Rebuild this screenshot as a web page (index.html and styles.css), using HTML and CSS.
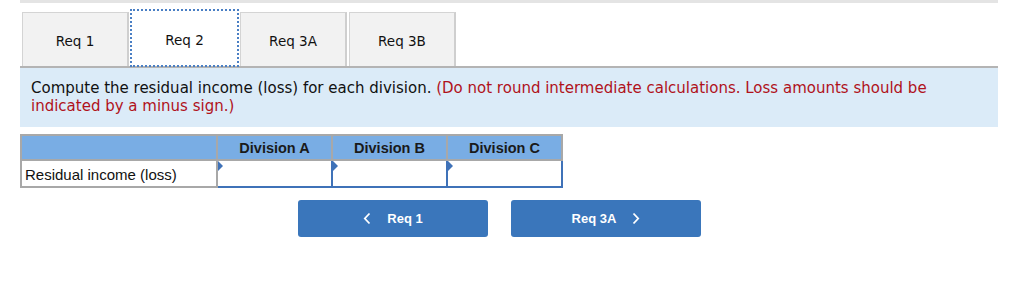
FILE: index.html
```html
<!DOCTYPE html>
<html lang="en">
<head>
  <meta charset="UTF-8">
  <title>Residual Income</title>
  <link rel="stylesheet" href="styles.css">
</head>
<body>
  <div class="page">
    <div class="top-bar"></div>

    <div class="tabs">
      <div class="tab">Req 1</div>
      <div class="tab active">Req 2</div>
      <div class="tab">Req 3A</div>
      <div class="tab">Req 3B</div>
    </div>

    <div class="question">
      Compute the residual income (loss) for each division. <span class="note">(Do not round intermediate calculations. Loss amounts should be indicated by a minus sign.)</span>
    </div>

    <table class="answer">
      <tr>
        <th class="label-col"></th>
        <th>Division A</th>
        <th>Division B</th>
        <th>Division C</th>
      </tr>
      <tr>
        <td class="label-col">Residual income (loss)</td>
        <td class="input-cell"><span class="marker"></span></td>
        <td class="input-cell"><span class="marker"></span></td>
        <td class="input-cell"><span class="marker"></span></td>
      </tr>
    </table>

    <div class="nav-buttons">
      <button class="nav-btn">
        <svg width="8" height="13" viewBox="0 0 8 13"><path d="M6.5 1.5 L1.8 6.5 L6.5 11.5" fill="none" stroke="#fff" stroke-width="1.8"/></svg>
        <span>Req 1</span>
      </button>
      <button class="nav-btn">
        <span>Req 3A</span>
        <svg width="8" height="13" viewBox="0 0 8 13"><path d="M1.5 1.5 L6.2 6.5 L1.5 11.5" fill="none" stroke="#fff" stroke-width="1.8"/></svg>
      </button>
    </div>
  </div>
</body>
</html>
```

FILE: styles.css
```css
* {
  margin: 0;
  padding: 0;
  box-sizing: border-box;
}

body {
  background: #fff;
  font-family: "DejaVu Sans", Verdana, sans-serif;
  color: #222;
}

.page {
  margin-left: 20px;
  width: 978px;
}

.top-bar {
  height: 3px;
  background: #e4e4e4;
}

/* Tabs */
.tabs {
  display: flex;
  gap: 2px;
  padding: 9px 0 0 2px;
}

.tab {
  width: 107px;
  height: 54px;
  display: flex;
  align-items: center;
  justify-content: center;
  padding-top: 2px;
  background: #f2f2f2;
  border: 1px solid #d4d4d4;
  border-right: 2px solid #cfcfcf;
  border-bottom: none;
  font-size: 13.5px;
  color: #111;
}

.tab.active {
  background: #fff;
  border: none;
  outline: 2px dotted #4a7fc4;
  outline-offset: -1px;
  height: 56px;
  margin-top: -2px;
  padding-top: 4px;
  position: relative;
  z-index: 1;
}

/* Question panel */
.question {
  background: #dbebf8;
  border-top: 2px solid #b4b4b4;
  padding: 11px 11px 0 11px;
  font-size: 15px;
  line-height: 18px;
  color: #111;
  height: 61px;
}

.note {
  color: #b0121b;
}

/* Table */
.answer {
  margin-top: 7px;
  border-collapse: collapse;
  font-family: "Liberation Sans", Arial, sans-serif;
  border: 2px solid #a8a8a8;
}

.answer th {
  background: #79ade4;
  height: 25px;
  font-size: 14.5px;
  font-weight: bold;
  color: #1a1a1a;
  border: 2px solid #a8a8a8;
  border-top: none;
  width: 115px;
  padding: 0;
}

.answer th.label-col {
  width: 196px;
}

.answer td {
  height: 27px;
  border: 1px solid #a8a8a8;
  padding: 0;
}

.answer td.label-col {
  font-size: 15px;
  padding: 1px 0 0 3px;
  color: #111;
  border-right: 2px solid #a8a8a8;
}

.answer td.input-cell {
  border: 2px solid #3f72b8;
  position: relative;
  background: #fff;
}

.marker {
  position: absolute;
  left: 0;
  top: 0;
  width: 0;
  height: 0;
  border-top: 5px solid transparent;
  border-bottom: 5px solid transparent;
  border-left: 5px solid #3f72b8;
}

/* Navigation buttons */
.nav-buttons {
  display: flex;
  gap: 23px;
  padding: 12px 0 0 278px;
}

.nav-btn {
  width: 190px;
  height: 37px;
  background: #3a76bb;
  border: none;
  border-radius: 3px;
  color: #fff;
  font-family: "Liberation Sans", Arial, sans-serif;
  font-weight: bold;
  font-size: 13px;
  display: flex;
  align-items: center;
  justify-content: center;
  gap: 16px;
}
```
